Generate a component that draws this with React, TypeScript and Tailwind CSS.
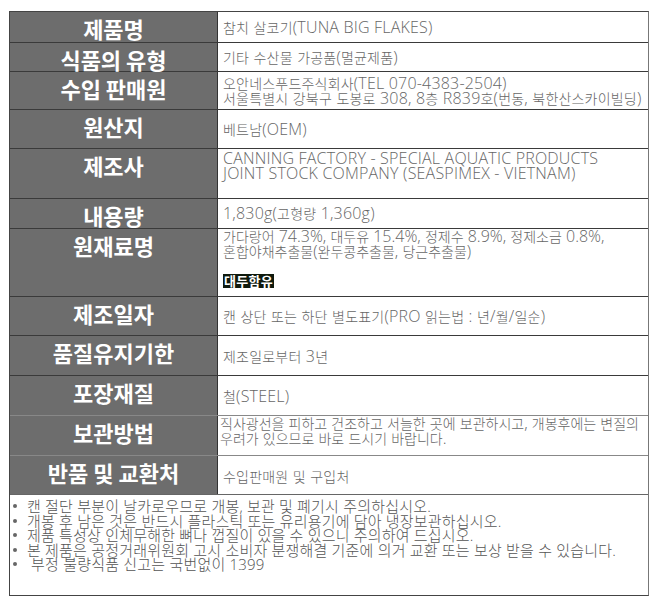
import React from "react";

type Row = {
  label: string;
  rowCls: string;
  valCls: string;
  lines: string[];
  badge?: boolean;
};

const rows: Row[] = [
  { label: "제품명", rowCls: "h-[31px] border-b border-[#3a3a3a]", valCls: "justify-center", lines: ["참치 살코기(TUNA BIG FLAKES)"] },
  { label: "식품의 유형", rowCls: "h-[29px] border-b border-[#3a3a3a]", valCls: "justify-center", lines: ["기타 수산물 가공품(멸균제품)"] },
  {
    label: "수입 판매원",
    rowCls: "h-[38px] border-b border-[#3a3a3a]",
    valCls: "justify-center",
    lines: ["오안네스푸드주식회사(TEL 070-4383-2504)", "서울특별시 강북구 도봉로 308, 8층 R839호(번동, 북한산스카이빌딩)"],
  },
  { label: "원산지", rowCls: "h-[39px] border-b border-[#3a3a3a]", valCls: "justify-center", lines: ["베트남(OEM)"] },
  {
    label: "제조사",
    rowCls: "h-[50px] border-b border-[#3a3a3a]",
    valCls: "pt-[2px]",
    lines: ["CANNING FACTORY - SPECIAL AQUATIC PRODUCTS", "JOINT STOCK COMPANY (SEASPIMEX - VIETNAM)"],
  },
  { label: "내용량", rowCls: "h-[30px] border-b border-[#3a3a3a]", valCls: "justify-center", lines: ["1,830g(고형량 1,360g)"] },
  {
    label: "원재료명",
    rowCls: "h-[68px] border-b border-[#3a3a3a]",
    valCls: "pt-[0px] !tracking-[0px]",
    lines: ["가다랑어 74.3%, 대두유 15.4%, 정제수 8.9%, 정제소금 0.8%,", "혼합야채추출물(완두콩추출물, 당근추출물)"],
    badge: true,
  },
  { label: "제조일자", rowCls: "h-[39px] border-b border-[#3a3a3a]", valCls: "justify-center", lines: ["캔 상단 또는 하단 별도표기(PRO 읽는법 : 년/월/일순)"] },
  { label: "품질유지기한", rowCls: "h-[40px] border-b border-[#3a3a3a]", valCls: "justify-center pt-[2px]", lines: ["제조일로부터 3년"] },
  { label: "포장재질", rowCls: "h-[40px] border-b border-[#888]", valCls: "justify-center pt-[2px]", lines: ["철(STEEL)"] },
  {
    label: "보관방법",
    rowCls: "h-[40px] border-b border-[#888]",
    valCls: "pt-[0px] !pl-[2px] !tracking-[0px]",
    lines: ["직사광선을 피하고 건조하고 서늘한 곳에 보관하시고, 개봉후에는 변질의", "우려가 있으므로 바로 드시기 바랍니다."],
  },
  { label: "반품 및 교환처", rowCls: "h-[39px] border-b border-[#666]", valCls: "justify-center pt-[2px]", lines: ["수입판매원 및 구입처"] },
];

const notes = [
  "캔 절단 부분이 날카로우므로 개봉, 보관 및 폐기시 주의하십시오.",
  "개봉 후 남은 것은 반드시 플라스틱 또는 유리용기에 담아 냉장보관하십시오.",
  "제품 특성상 인체무해한 뼈나 껍질이 있을 수 있으니 주의하여 드십시오.",
  "본 제품은 공정거래위원회 고시 소비자 분쟁해결 기준에 의거 교환 또는 보상 받을 수 있습니다.",
  "\u00a0부정 불량식품 신고는 국번없이 1399",
];

function Mixed({ text }: { text: string }) {
  const parts = text.split(/([\x00-\x7F]+)/).filter((p) => p.length > 0);
  return (
    <>
      {parts.map((p, i) =>
        /^[\x00-\x7F]+$/.test(p) ? (
          <span key={i} className="font-['Open_Sans',sans-serif] text-[16px]">
            {p}
          </span>
        ) : (
          <span key={i}>{p}</span>
        )
      )}
    </>
  );
}

export default function App() {
  return (
    <div className="w-[658px] h-[607px] bg-white font-['Noto_Sans_CJK_KR','Noto_Sans',sans-serif] pt-[11px] pl-[9px]">
      <div className="w-[640px] border border-[#444] border-r-[#777]">
        {rows.map((r) => (
          <div key={r.label} className={"flex " + r.rowCls}>
            <div className="w-[208px] shrink-0 bg-[#6d6d6d] border-r border-[#333] text-white font-bold text-[22px] leading-[26px] pt-[3px] text-center whitespace-nowrap">
              {r.label}
            </div>
            <div className={"flex-1 min-w-0 flex flex-col pl-[5px] text-[14px] leading-[15px] text-[#666] font-light tracking-[0.2px] " + r.valCls}>
              {r.lines.map((l) => (
                <div key={l} className="whitespace-nowrap h-[15px]">
                  <Mixed text={l} />
                </div>
              ))}
              {r.badge && (
                <div className="mt-[14px]">
                  <span className="inline-block bg-[#0f1a0e] text-white font-bold text-[13px] leading-[14px] px-[1px] tracking-[0.3px]">대두함유</span>
                </div>
              )}
            </div>
          </div>
        ))}
        <div className="h-[100px] pt-[4px] font-['Open_Sans','Noto_Sans_CJK_KR',sans-serif] text-[15px] leading-[14.5px] text-[#555] font-light tracking-[0.2px]">
          {notes.map((n) => (
            <div key={n} className="flex items-center whitespace-nowrap h-[14.5px]">
              <span className="w-[17px] shrink-0 flex pl-[3px]">
                <span className="w-[4px] h-[4px] rounded-full bg-[#666]" />
              </span>
              <span>{n}</span>
            </div>
          ))}
        </div>
      </div>
    </div>
  );
}
